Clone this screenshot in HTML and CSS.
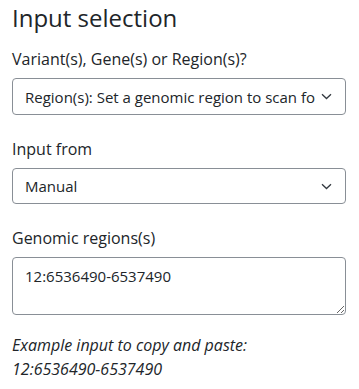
FILE: index.html
```html
<!DOCTYPE html>
<html>
<head>
<meta charset="utf-8">
<link rel="stylesheet" href="styles.css">
</head>
<body>
<div class="panel">
  <h2 class="title">Input selection</h2>
  <div class="field">
    <label class="label">Variant(s), Gene(s) or Region(s)?</label>
    <div class="select sel-1">
      <span class="select-text">Region(s): Set a genomic region to scan for</span>
      <svg class="chev" width="11" height="7" viewBox="0 0 11 7"><path d="M1 1.2 L5.5 5.5 L10 1.2" fill="none" stroke="#343a40" stroke-width="1.3"/></svg>
    </div>
  </div>
  <div class="field">
    <label class="label">Input from</label>
    <div class="select sel-2">
      <span class="select-text">Manual</span>
      <svg class="chev" width="11" height="7" viewBox="0 0 11 7"><path d="M1 1.2 L5.5 5.5 L10 1.2" fill="none" stroke="#343a40" stroke-width="1.3"/></svg>
    </div>
  </div>
  <div class="field">
    <label class="label">Genomic regions(s)</label>
    <textarea class="textarea">12:6536490-6537490</textarea>
  </div>
  <p class="example">Example input to copy and paste:<br>12:6536490-6537490</p>
</div>
</body>
</html>
```
FILE: styles.css
```css
html, body { margin: 0; padding: 0; background: #fff; }
body { font-family: "Open Sans", "Noto Sans", sans-serif; color: #212529; }
.panel { padding: 0 13px 0 12px; }
.title { margin: 0; padding-top: 2px; font-size: 24px; font-weight: 400; line-height: 32px; }
.field { display: flex; flex-direction: column; margin-top: 13px; }
.field + .field { margin-top: 22px; }
.label { font-size: 16px; line-height: 24px; margin-bottom: 7px; }
.select { display: flex; align-items: center; box-sizing: border-box; border: 1px solid #898f96; border-radius: 4px; padding: 0 13px 0 12px; font-size: 15px; overflow: hidden; }
.sel-1 { height: 37px; }
.sel-2 { height: 36px; }
.select-text { flex: 1; white-space: nowrap; overflow: hidden; }
.chev { flex: none; margin-left: 6px; }
.textarea { display: block; height: 58px; box-sizing: border-box; border: 1px solid #898f96; border-radius: 4px; padding: 6px 12px; font-family: inherit; font-size: 15px; line-height: 24px; color: #212529; resize: vertical; margin: 0; }
.example { margin: 18px 0 0; font-style: italic; font-size: 16px; line-height: 24px; }
```
